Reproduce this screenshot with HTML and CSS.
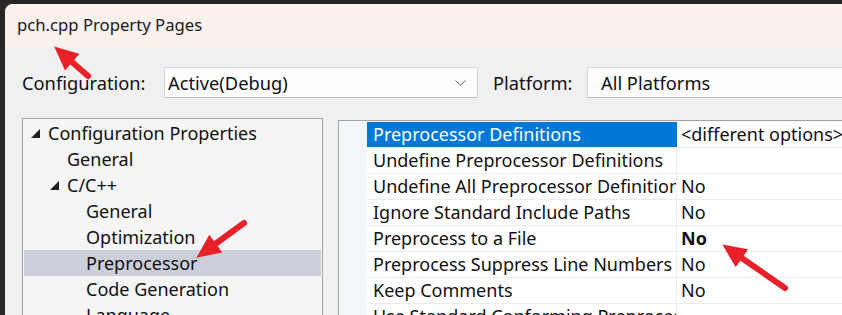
FILE: index.html
```html
<!DOCTYPE html>
<html lang="en">
<head>
    <meta charset="UTF-8">
    <title>pch.cpp Property Pages</title>
    <link rel="stylesheet" href="styles.css">
</head>
<body>
    <div class="desk">
        <div class="dialog">
            <div class="titlebar">pch.cpp Property Pages</div>

            <div class="content">
                <!-- Configuration / platform selectors -->
                <div class="config-row">
                    <span class="lbl lbl-config">Configuration:</span>
                    <div class="combo combo-config">
                        <span>Active(Debug)</span>
                        <svg class="chevron" width="11" height="6" viewBox="0 0 11 6"><path d="M0.5 0.5 L5.5 5.2 L10.5 0.5" fill="none" stroke="#5f5f5f" stroke-width="1"/></svg>
                    </div>
                    <span class="lbl lbl-platform">Platform:</span>
                    <div class="combo combo-platform"><span>All Platforms</span></div>
                </div>

                <div class="panes">
                    <!-- Left tree -->
                    <div class="tree">
                        <div class="node lvl0"><span class="twisty"><svg width="9" height="9" viewBox="0 0 9 9"><polygon points="9,0 9,9 0,9" fill="#1e1e1e"/></svg></span>Configuration Properties</div>
                        <div class="node lvl1"><span class="twisty"></span>General</div>
                        <div class="node lvl1"><span class="twisty"><svg width="9" height="9" viewBox="0 0 9 9"><polygon points="9,0 9,9 0,9" fill="#1e1e1e"/></svg></span>C/C++</div>
                        <div class="node lvl2"><span class="twisty"></span>General</div>
                        <div class="node lvl2"><span class="twisty"></span>Optimization</div>
                        <div class="node lvl2 selected"><span class="twisty"></span>Preprocessor</div>
                        <div class="node lvl2"><span class="twisty"></span>Code Generation</div>
                        <div class="node lvl2"><span class="twisty"></span>Language</div>
                    </div>

                    <!-- Property grid -->
                    <div class="grid">
                        <div class="prow"><div class="pname active">Preprocessor Definitions</div><div class="pval">&lt;different options&gt;</div></div>
                        <div class="prow"><div class="pname">Undefine Preprocessor Definitions</div><div class="pval"></div></div>
                        <div class="prow"><div class="pname">Undefine All Preprocessor Definitions</div><div class="pval">No</div></div>
                        <div class="prow"><div class="pname">Ignore Standard Include Paths</div><div class="pval">No</div></div>
                        <div class="prow"><div class="pname">Preprocess to a File</div><div class="pval bold">No</div></div>
                        <div class="prow"><div class="pname">Preprocess Suppress Line Numbers</div><div class="pval">No</div></div>
                        <div class="prow"><div class="pname">Keep Comments</div><div class="pval">No</div></div>
                        <div class="prow"><div class="pname">Use Standard Conforming Preprocessor</div><div class="pval"></div></div>
                    </div>
                </div>
            </div>
        </div>

        <!-- annotation arrows -->
        <svg class="arrows" width="842" height="315" viewBox="0 0 842 315">
            <defs>
                <marker id="head" markerUnits="userSpaceOnUse" markerWidth="24" markerHeight="22" viewBox="0 0 24 22" refX="11" refY="11" orient="auto">
                    <path d="M0 0 L24 11 L0 22 Z" fill="#e8202a"/>
                </marker>
            </defs>
            <line x1="88" y1="76" x2="64" y2="55" stroke="#e8202a" stroke-width="6" stroke-linecap="round" marker-end="url(#head)"/>
            <line x1="244" y1="223" x2="207" y2="250" stroke="#e8202a" stroke-width="6" stroke-linecap="round" marker-end="url(#head)"/>
            <line x1="785" y1="288" x2="733" y2="252" stroke="#e8202a" stroke-width="6" stroke-linecap="round" marker-end="url(#head)"/>
        </svg>
    </div>
</body>
</html>
```

FILE: styles.css
```css
body {
    margin: 0;
    background: #272727;
    font-family: "Noto Sans", "Open Sans", sans-serif;
    color: #111;
    overflow: hidden;
}

.desk {
    position: relative;
    width: 842px;
    height: 315px;
    padding: 4px 0 0 5px;
    box-sizing: border-box;
    overflow: hidden;
}

.dialog {
    width: 900px;
    height: 340px;
    background: #f0f0f0;
    border-radius: 8px 0 0 0;
    overflow: hidden;
}

.titlebar {
    height: 43px;
    background: #f9f1eb;
    padding-left: 12px;
    padding-bottom: 2px;
    box-sizing: border-box;
    display: flex;
    align-items: center;
    font-size: 16.7px;
    color: #1a1a1a;
}

.content {
    padding: 20px 0 0 17px;
}

.config-row {
    display: flex;
    align-items: center;
    height: 31px;
    font-size: 18.3px;
}

.lbl-config {
    width: 142px;
}

.lbl-platform {
    margin-left: 15px;
    width: 94px;
}

.combo {
    height: 31px;
    box-sizing: border-box;
    border: 1px solid #d6d6d6;
    border-bottom-color: #bcbcbc;
    border-radius: 2px;
    background: #fdfdfd;
    display: flex;
    align-items: center;
    padding-left: 3px;
}

.combo-config {
    width: 314px;
    justify-content: space-between;
    padding-right: 11px;
}

.combo-platform {
    flex: 1;
    padding-left: 13px;
}

.panes {
    display: flex;
    align-items: flex-start;
    margin-top: 20px;
    font-size: 18px;
}

.tree {
    width: 301px;
    height: 220px;
    box-sizing: border-box;
    border: 1px solid #a3a3a3;
    border-bottom: none;
    background: #f5f5f5;
    padding: 1px;
}

.node {
    height: 26px;
    display: flex;
    align-items: center;
    white-space: nowrap;
}

.node.lvl0 { padding-left: 5px; }
.node.lvl1 { padding-left: 24px; }
.node.lvl2 { padding-left: 43px; }

.node.selected {
    background: #ccced9;
}

.twisty {
    width: 19px;
    flex: none;
    display: flex;
    align-items: center;
    padding-left: 2px;
    box-sizing: border-box;
}

.grid {
    flex: 1;
    height: 220px;
    margin-left: 15px;
    margin-top: 2px;
    border: 1px solid #a3a3a3;
    border-bottom: none;
    background: #f3f6fb;
    padding: 1px 0 0 28px;
}

.prow {
    display: flex;
    height: 26px;
    box-sizing: border-box;
    border-bottom: 1px solid #ececec;
    background: #fff;
}

.pname {
    width: 310px;
    flex: none;
    box-sizing: border-box;
    padding-left: 6px;
    border-right: 1px solid #ececec;
    white-space: nowrap;
    overflow: hidden;
    line-height: 25px;
}

.pname.active {
    background: #0078d7;
    color: #fff;
    border-right-color: #0078d7;
}

.pval {
    padding-left: 4px;
    white-space: nowrap;
    line-height: 25px;
}

.pval.bold {
    font-weight: bold;
}

.arrows {
    position: absolute;
    left: 0;
    top: 0;
    pointer-events: none;
}
```
